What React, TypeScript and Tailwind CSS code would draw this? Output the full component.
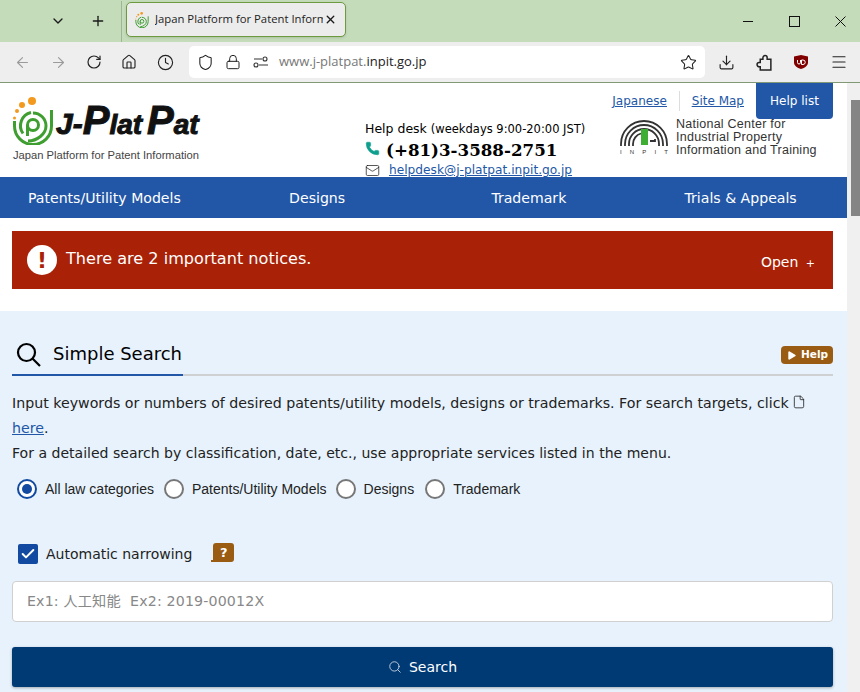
import { ArrowLeft, ArrowRight, RotateCw, House, Clock, Shield, Lock, Star, Download, Menu, ChevronDown, Plus, X, Phone, Mail, Search, File, Check, Play } from "lucide-react"

const pageFont = "font-['DejaVu_Sans',sans-serif]"
const uiFont = "font-['Open_Sans',sans-serif]"

function SpiralLogo({ className }: { className: string }) {
  return (
    <svg viewBox="0 0 42 48" className={className} fill="none">
      <circle cx="20" cy="4" r="4" fill="#f39a1e" />
      <circle cx="10" cy="8" r="3" fill="#f39a1e" />
      <circle cx="5" cy="14" r="2" fill="#f39a1e" />
      <circle cx="2.500" cy="21" r="1.500" fill="#f39a1e" />
      <g stroke="#3f9e30" strokeWidth="3">
        <path d="M2.500 24v5a18.500 18.500 0 0 0 37 0V13" />
        <path d="M19 15.500a13.500 13.500 0 0 0-8 21" />
        <path d="M16 44c9 0 18-7 18-15a13 13 0 0 0-13-13" />
        <circle cx="21" cy="28" r="5.500" />
        <path d="M15.500 28v11" />
      </g>
    </svg>
  )
}

function InpitLogo() {
  return (
    <div className="flex flex-col items-center w-[48px] mt-[2px]">
      <svg viewBox="0 0 48 26" className="w-[48px] h-[26px]" fill="none" stroke="#333" strokeWidth="1.800">
        <path d="M1 26V24a23 23 0 0 1 46 0v2" />
        <path d="M5 26V24a19 19 0 0 1 38 0v2" />
        <path d="M9 26V24a15 15 0 0 1 30 0v2" />
        <path d="M13 26V24a11 11 0 0 1 8-10.500" />
        <path d="M30 21h5v-2" />
        <rect x="21" y="9" width="7" height="16" fill="#3fae35" stroke="none" />
      </svg>
      <div className="flex justify-between w-full text-[6px] leading-[8px] mt-[2px] text-[#333] font-['Liberation_Sans',sans-serif]">
        <span>I</span><span>N</span><span>P</span><span>I</span><span>T</span>
      </div>
    </div>
  )
}

function BrowserChrome() {
  return (
    <div className={uiFont}>
      <div className="h-[42px] bg-[#c5dcbb] flex items-center text-[#1a1a1a]">
        <ChevronDown className="w-[16px] h-[16px] ml-[50px]" strokeWidth={2} />
        <Plus className="w-[16px] h-[16px] ml-[24px]" strokeWidth={2} />
        <div className="h-[41px] w-px bg-[#9fb596] ml-[15px]" />
        <div className="ml-[4px] mt-[-3px] w-[220px] h-[35px] bg-[#ececec] border border-[#6d9a3f] rounded-[5px] flex items-center pl-[7px] shadow-sm">
          <SpiralLogo className="w-[16px] h-[16px] shrink-0" />
          <span className="ml-[5px] w-[168px] overflow-hidden whitespace-nowrap text-[11.300px] text-[#222]">Japan Platform for Patent Information</span>
          <X className="w-[13px] h-[13px] shrink-0 ml-[1px]" strokeWidth={2.5} />
        </div>
        <div className="ml-auto flex items-center">
          <svg viewBox="0 0 10 10" className="w-[10px] h-[10px] mr-[36px]" stroke="#111"><path d="M0 5.500h10" /></svg>
          <div className="w-[11px] h-[11px] border border-[#111] mr-[35px]" />
          <svg viewBox="0 0 11 11" className="w-[11px] h-[11px] mr-[14px]" stroke="#111"><path d="M0.500 0.500l10 10M10.500 0.500l-10 10" /></svg>
        </div>
      </div>
      <div className="h-[41px] bg-[#eeeeee] border-b border-[#7f9a75] flex items-center text-[#222]">
        <ArrowLeft className="w-[17px] h-[17px] ml-[14px] text-[#9a9a9a]" strokeWidth={1.6} />
        <ArrowRight className="w-[17px] h-[17px] ml-[19px] text-[#9a9a9a]" strokeWidth={1.6} />
        <RotateCw className="w-[16px] h-[16px] ml-[19px]" strokeWidth={1.8} />
        <House className="w-[16px] h-[16px] ml-[19px]" strokeWidth={1.7} />
        <Clock className="w-[17px] h-[17px] ml-[20px]" strokeWidth={1.6} />
        <div className="ml-[15px] w-[516px] h-[32px] bg-white rounded-[5px] flex items-center pl-[8px]">
          <Shield className="w-[17px] h-[17px]" strokeWidth={1.5} />
          <Lock className="w-[16px] h-[16px] ml-[11px]" strokeWidth={1.5} />
          <svg viewBox="0 0 16 16" className="w-[16px] h-[16px] ml-[12px]" fill="none" stroke="#333" strokeWidth="1.100">
            <path d="M1 5h8M6 11h9" />
            <circle cx="12" cy="5" r="2" />
            <circle cx="3" cy="11" r="2" />
          </svg>
          <span className="ml-[10px] text-[13px] text-[#777]">www.j-platpat.<span className="text-[#222]">inpit.go.jp</span></span>
          <Star className="w-[17px] h-[17px] ml-auto mr-[8px]" strokeWidth={1.5} />
        </div>
        <Download className="w-[17px] h-[17px] ml-[13px]" strokeWidth={1.6} />
        <svg viewBox="0 0 16 16" className="w-[17px] h-[17px] ml-[21px]" fill="none" stroke="#222" strokeWidth="1.400">
          <path d="M4 5h2.500V3.500a2 2 0 0 1 4 0V5H14v10H4v-3H3a2 2 0 0 1 0-4h1z" />
        </svg>
        <svg viewBox="0 0 16 16" className="w-[16px] h-[16px] ml-[20px]">
          <path d="M1 2.500 8 1l7 1.500v6c0 3-3 5.500-7 6.500-4-1-7-3.500-7-6.500z" fill="#800000" />
          <path d="M4.500 6v2.500a1.500 1.500 0 0 0 3 0V6M8.500 6h1.500a2 2 0 0 1 0 4.500h-1.500z" fill="none" stroke="#fff" strokeWidth="1" />
        </svg>
        <Menu className="w-[18px] h-[18px] ml-[21px]" strokeWidth={1.6} />
      </div>
    </div>
  )
}

function Header() {
  return (
    <header className="h-[94px] flex bg-white">
      <div className="pl-[12px] pt-[14px] w-[365px] shrink-0">
        <div className="flex items-end h-[48px]">
          <SpiralLogo className="w-[42px] h-[48px] shrink-0" />
          <div className="ml-[2px] mb-[5px] flex items-baseline font-['Liberation_Sans',sans-serif] font-bold italic leading-none text-[#111] whitespace-nowrap [-webkit-text-stroke:1px_#111]">
            <span className="text-[30px]">J-</span>
            <span className="text-[40px]">P</span>
            <span className="text-[28px]">lat</span>
            <span className="text-[40px] ml-[5px]">P</span>
            <span className="text-[28px]">at</span>
          </div>
        </div>
        <div className="text-[11.200px] leading-[14px] mt-[3px] ml-[1px] text-[#444] whitespace-nowrap font-['Liberation_Sans',sans-serif]">Japan Platform for Patent Information</div>
      </div>
      <div className="flex-1 flex flex-col">
        <div className="h-[36px] flex justify-end items-start pr-[14px]">
          <div className={`${pageFont} flex items-center h-[36px] text-[12px] text-[#2257a7] underline`}>
            <a>Japanese</a>
            <div className="w-px h-[20px] bg-[#ddd] mx-[12px]" />
            <a>Site Map</a>
          </div>
          <div className={`${pageFont} ml-[12px] w-[77px] h-[36px] bg-[#2257a7] rounded-b-[4px] flex items-center justify-center text-white text-[12px] font-normal`}>Help list</div>
        </div>
        <div className="flex flex-1">
          <div className={`${pageFont} w-[255px] shrink-0 text-black`}>
            <div className="text-[12.500px] leading-[16px] mt-[2px] whitespace-nowrap">Help desk <span className="text-[11.500px]">(weekdays 9:00-20:00 JST)</span></div>
            <div className="flex items-center h-[24px] mt-[1px]">
              <Phone className="w-[15px] h-[15px] text-[#0e9f8e] -mt-[3px]" fill="#0e9f8e" strokeWidth={1} />
              <span className="ml-[6px] font-['DejaVu_Serif',serif] font-bold text-[16.700px] leading-none whitespace-nowrap">(+81)3-3588-2751</span>
            </div>
            <div className="flex items-center h-[16px]">
              <Mail className="w-[15px] h-[15px] text-[#222]" strokeWidth={1.2} />
              <a className="ml-[9px] text-[12.200px] text-[#2257a7] underline whitespace-nowrap">helpdesk@j-platpat.inpit.go.jp</a>
            </div>
          </div>
          <div className="flex items-start -mt-[1px]">
            <InpitLogo />
            <div className="ml-[8px] text-[12.500px] leading-[13px] text-[#333] font-['Liberation_Sans',sans-serif] whitespace-nowrap tracking-[0.25px]">
              National Center for<br />Industrial Property<br />Information and Training
            </div>
          </div>
        </div>
      </div>
    </header>
  )
}

function Radio({ label, checked, gap }: { label: string; checked?: boolean; gap: string }) {
  return (
    <label className={`flex items-center ${gap}`}>
      <span className={`w-[20px] h-[20px] rounded-full border-2 flex items-center justify-center bg-white ${checked ? "border-[#114aa0]" : "border-[#777]"}`}>
        {checked && <span className="w-[10px] h-[10px] rounded-full bg-[#114aa0]" />}
      </span>
      <span className="ml-[8px] text-[14px] text-[#222] font-['Liberation_Sans',sans-serif]">{label}</span>
    </label>
  )
}

export default function App() {
  const nav = ["Patents/Utility Models", "Designs", "Trademark", "Trials & Appeals"]

  return (
    <div className="w-[860px] h-[692px] overflow-hidden bg-white">
      <BrowserChrome />
      <div className="flex h-[609px]">
        <main className={`${pageFont} w-[847px] shrink-0`}>
          <Header />
          <nav className="h-[41px] pt-[2px] bg-[#2257a7] grid grid-cols-4 items-center text-center text-white text-[14.100px]">
            {nav.map((item, i) => (
              <span key={item} className={i === 0 ? "pr-[3px]" : "pr-[1px]"}>{item}</span>
            ))}
          </nav>
          <div className="h-[93px] pl-[12px] pr-[14px] pt-[13px]">
            <div className="h-[58px] bg-[#a92207] flex items-center pl-[15px] pr-[18px] text-white">
              <span className="w-[30px] h-[30px] rounded-full bg-white text-[#a92207] font-bold text-[22px] flex items-center justify-center">!</span>
              <span className="ml-[9px] text-[16.100px] -mt-[2px]">There are 2 important notices.</span>
              <span className="ml-auto text-[14px] mt-[4px]">Open <span className="ml-[3px] text-[11px]">+</span></span>
            </div>
          </div>
          <section className="h-[381px] bg-[#e7f2fc] pl-[12px] pr-[14px] pt-[24px]">
            <div className="flex items-end h-[41px] border-b-2 border-[#cfd0d2]">
              <div className="w-[171px] h-[41px] flex items-center border-b-2 border-[#2257a7] -mb-[2px] pl-[4px]">
                <svg viewBox="0 0 25 25" className="w-[25px] h-[25px] shrink-0" fill="none" stroke="#000" strokeWidth="2.200">
                  <circle cx="10.500" cy="10.500" r="8.500" />
                  <path d="M16.500 16.500l7.500 7.500" />
                </svg>
                <span className="ml-[12px] text-[18px] text-black leading-none -mt-[2px]">Simple Search</span>
              </div>
              <div className="ml-auto mb-[10px] w-[52px] h-[18px] rounded-[4px] bg-[#9a5c12] flex items-center justify-center text-white text-[10.500px] font-bold">
                <Play className="w-[11px] h-[11px] mr-[4px]" fill="#fff" strokeWidth={0} />Help
              </div>
            </div>
            <div className="mt-[15px] text-[14.200px] leading-[25px] text-[#222]">
              <p>
                Input keywords or numbers of desired patents/utility models, designs or trademarks. For search targets, click
                <File className="inline w-[14px] h-[14px] ml-[3px] mb-[5px]" strokeWidth={1.4} />
                {" "}
                <a className="text-[#2257a7] underline">here</a>.
              </p>
              <p className="text-[14.050px]">For a detailed search by classification, date, etc., use appropriate services listed in the menu.</p>
            </div>
            <div className="flex mt-[11px] pl-[5px] h-[24px] items-center">
              <Radio label="All law categories" checked gap="mr-[10px]" />
              <Radio label="Patents/Utility Models" gap="mr-[9px]" />
              <Radio label="Designs" gap="mr-[11px]" />
              <Radio label="Trademark" gap="" />
            </div>
            <div className="flex items-center mt-[41px] pl-[6px] h-[24px]">
              <span className="w-[20px] h-[20px] rounded-[2px] bg-[#114aa0] flex items-center justify-center">
                <Check className="w-[16px] h-[16px] text-white" strokeWidth={3} />
              </span>
              <span className="ml-[8px] text-[14px] text-[#222]">Automatic narrowing</span>
              <span className="relative ml-[21px] w-[21px] h-[19px] rounded-[3px] rounded-bl-none bg-[#9a5c12] text-white text-[13px] font-bold flex items-center justify-center -mt-[3px]">
                ?
                <span className="absolute -left-[2px] bottom-0 w-[3px] h-[2px] bg-[#9a5c12]" />
              </span>
            </div>
            <div className="mt-[15px] h-[41px] pt-[1px] bg-white border border-[#d0d0d0] rounded-[4px] flex items-center pl-[14px] text-[14.200px] tracking-[0.15px] text-[#888] font-['DejaVu_Sans','Noto_Sans_CJK_JP',sans-serif]">
              Ex1: 人工知能&nbsp;&nbsp;Ex2: 2019-00012X
            </div>
            <div className="mt-[25px] h-[40px] bg-[#003a75] rounded-[3px] shadow-[0_1px_3px_rgba(0,0,0,0.3)] flex items-center justify-center text-white text-[14px]">
              <Search className="w-[14px] h-[14px] mr-[7px] text-[#cfd8e4]" strokeWidth={1.5} />Search
            </div>
          </section>
        </main>
        <aside className="w-[13px] bg-[#f0f0f0] pt-[17px] pl-[4px]">
          <div className="w-[9px] h-[116px] bg-[#858585]" />
        </aside>
      </div>
    </div>
  )
}
